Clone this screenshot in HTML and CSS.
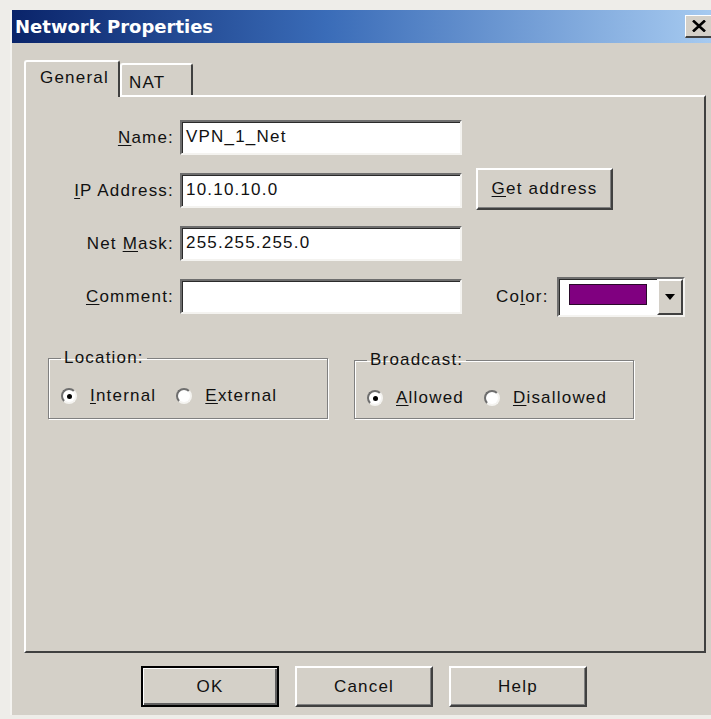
FILE: index.html
```html
<!DOCTYPE html>
<html lang="en">
<head>
<meta charset="utf-8">
<title>Network Properties</title>
<link rel="stylesheet" href="styles.css">
</head>
<body>
<div class="window">
  <div class="titlebar">
    <span class="title">Network Properties</span>
    <span class="close">
      <svg width="14" height="12" viewBox="0 0 14 12"><path d="M1 0.5 L13 11.5 M13 0.5 L1 11.5" stroke="#000" stroke-width="2.6"/></svg>
    </span>
  </div>
  <div class="client">
    <div class="tabs">
      <div class="tab active">General</div>
      <div class="tab">NAT</div>
    </div>
    <div class="panel">
      <div class="form">
        <label class="lbl"><u>N</u>ame:</label>
        <div class="field">VPN_1_Net</div>
        <div></div>

        <label class="lbl"><u>I</u>P Address:</label>
        <div class="field">10.10.10.0</div>
        <div class="extra"><button class="btn getaddr"><u>G</u>et address</button></div>

        <label class="lbl">Net <u>M</u>ask:</label>
        <div class="field">255.255.255.0</div>
        <div></div>

        <label class="lbl"><u>C</u>omment:</label>
        <div class="field"></div>
        <div class="extra color-row">
          <span class="lbl">Co<u>l</u>or:</span>
          <div class="colorbox">
            <span class="swatch"></span>
            <span class="drop">
              <svg width="10" height="6" viewBox="0 0 10 6"><path d="M0 0 H10 L5 6 Z" fill="#000"/></svg>
            </span>
          </div>
        </div>
      </div>

      <div class="groups">
        <fieldset class="group loc">
          <legend>Location:</legend>
          <div class="radios">
            <span class="radio"><span class="dot checked"></span><span><u>I</u>nternal</span></span>
            <span class="radio"><span class="dot"></span><span><u>E</u>xternal</span></span>
          </div>
        </fieldset>
        <fieldset class="group bc">
          <legend>Broadcast:</legend>
          <div class="radios">
            <span class="radio"><span class="dot checked"></span><span><u>A</u>llowed</span></span>
            <span class="radio"><span class="dot"></span><span><u>D</u>isallowed</span></span>
          </div>
        </fieldset>
      </div>
    </div>

    <div class="actions">
      <button class="btn default">OK</button>
      <button class="btn">Cancel</button>
      <button class="btn">Help</button>
    </div>
  </div>
</div>
</body>
</html>
```

FILE: styles.css
```css
html, body {
  margin: 0;
  padding: 0;
  background: #eeede9;
  overflow: hidden;
}

body {
  font-family: "Liberation Sans", Arial, sans-serif;
  font-size: 17px;
  letter-spacing: 1.2px;
  color: #111;
}

u { text-decoration: underline; text-underline-offset: 2px; }

/* dialog frame */
.window {
  margin: 10px 0 0 10px;
  width: 701px;
  height: 705px;
  background: #d4d0c8;
  border-left: 2px solid #f4f3f0;
  box-sizing: border-box;
}

.titlebar {
  height: 33px;
  display: flex;
  align-items: center;
  background: linear-gradient(to right, #0a246a 0%, #3a6cb8 45%, #a6caf0 100%);
}

.title {
  font-family: "DejaVu Sans", sans-serif;
  font-weight: bold;
  font-size: 18px;
  letter-spacing: 0;
  color: #fff;
  padding-left: 3px;
}

.close {
  margin-left: auto;
  width: 26px;
  height: 23px;
  box-sizing: border-box;
  background: #d4d0c8;
  border-top: 1px solid #fff;
  border-left: 1px solid #fff;
  border-bottom: 2px solid #404040;
  display: flex;
  align-items: center;
  justify-content: center;
}

.client {
  padding: 17px 3px 0 12px;
}

/* tab strip */
.tabs {
  display: flex;
  align-items: flex-end;
  height: 36px;
  position: relative;
  z-index: 1;
  margin-bottom: -1px;
}

.tab {
  box-sizing: border-box;
  border-top: 2px solid #fff;
  border-left: 2px solid #fff;
  border-right: 2px solid #404040;
  border-radius: 3px 3px 0 0;
  background: #d4d0c8;
  padding: 0 12px;
  height: 32px;
  line-height: 30px;
  margin-bottom: 1px;
}

.tab.active {
  height: 37px;
  width: 96px;
  padding: 0 0 0 14px;
  line-height: 32px;
  margin-bottom: -1px;
}

.tab:not(.active) {
  width: 73px;
  padding: 4px 0 0 7px;
  line-height: 28px;
}

/* tab page */
.panel {
  box-sizing: border-box;
  width: 682px;
  height: 558px;
  border-top: 2px solid #fff;
  border-left: 2px solid #fff;
  border-right: 2px solid #404040;
  border-bottom: 2px solid #404040;
  padding-top: 23px;
}

.form {
  display: grid;
  grid-template-columns: 148px 282px 1fr;
  grid-template-rows: repeat(4, 35px);
  column-gap: 6px;
  row-gap: 18px;
  align-items: center;
}

.lbl {
  text-align: right;
  white-space: nowrap;
}

.field {
  box-sizing: border-box;
  height: 35px;
  background: #fff;
  border-top: 2px solid #6e6e6e;
  border-left: 2px solid #6e6e6e;
  border-bottom: 2px solid #f4f3f0;
  border-right: 2px solid #f4f3f0;
  box-shadow: inset 1px 1px #2a2a2a;
  padding: 0 4px;
  line-height: 30px;
  white-space: nowrap;
}

.extra {
  padding-left: 8px;
}

.btn {
  font: inherit;
  letter-spacing: inherit;
  color: #111;
  background: #d4d0c8;
  box-sizing: border-box;
  border: 2px solid;
  border-color: #fff #404040 #404040 #fff;
  box-shadow: inset -1px -1px #808080;
  padding: 0;
  cursor: default;
}

.getaddr {
  width: 137px;
  height: 42px;
  margin: -5px 0 -2px 0;
  display: block;
}

.color-row {
  display: flex;
  align-items: center;
  gap: 8px;
  padding-left: 28px;
}

.colorbox {
  box-sizing: border-box;
  width: 128px;
  height: 40px;
  margin: -2px 0 -3px 0;
  background: #fff;
  border-top: 2px solid #6e6e6e;
  border-left: 2px solid #6e6e6e;
  border-bottom: 2px solid #f4f3f0;
  border-right: 2px solid #f4f3f0;
  box-shadow: inset 1px 1px #2a2a2a;
  display: flex;
  align-items: stretch;
  padding: 5px 0 0 10px;
}

.swatch {
  width: 78px;
  height: 21px;
  box-sizing: border-box;
  background: #800080;
  border: 1px solid #2a0a2a;
}

.drop {
  margin: -5px 0 0 10px;
  flex: 1;
  box-sizing: border-box;
  background: #d4d0c8;
  border: 2px solid;
  border-color: #fff #404040 #404040 #fff;
  display: flex;
  align-items: center;
  justify-content: center;
}

/* group boxes */
.groups {
  display: flex;
  gap: 26px;
  margin: 34px 0 0 22px;
}

.group {
  margin: 0;
  box-sizing: border-box;
  width: 280px;
  border: 1px solid #808080;
  box-shadow: 1px 1px #fff, inset 1px 1px #fff;
  padding: 18px 10px 10px 12px;
  min-inline-size: 0;
}

.group.bc {
  margin-top: 2px;
}

.group legend {
  padding: 0 3px;
  line-height: 20px;
}

.radios {
  display: flex;
  gap: 20px;
  height: 20px;
  align-items: center;
}

.radio {
  display: flex;
  align-items: center;
  gap: 13px;
}

.dot {
  width: 16px;
  height: 16px;
  box-sizing: border-box;
  border-radius: 50%;
  border: 2px solid;
  border-color: #6e6e6e #f4f3f0 #f4f3f0 #6e6e6e;
  background: #fff;
  display: flex;
  align-items: center;
  justify-content: center;
}

.dot.checked::after {
  content: "";
  width: 5px;
  height: 5px;
  border-radius: 50%;
  background: #000;
}

/* dialog buttons */
.actions {
  display: flex;
  gap: 16px;
  margin: 13px 0 0 117px;
}

.actions .btn {
  width: 138px;
  height: 41px;
}

.actions .btn.default {
  border: 2px solid #000;
  box-shadow: inset 1px 1px #fff, inset -2px -2px #606060;
}
```
